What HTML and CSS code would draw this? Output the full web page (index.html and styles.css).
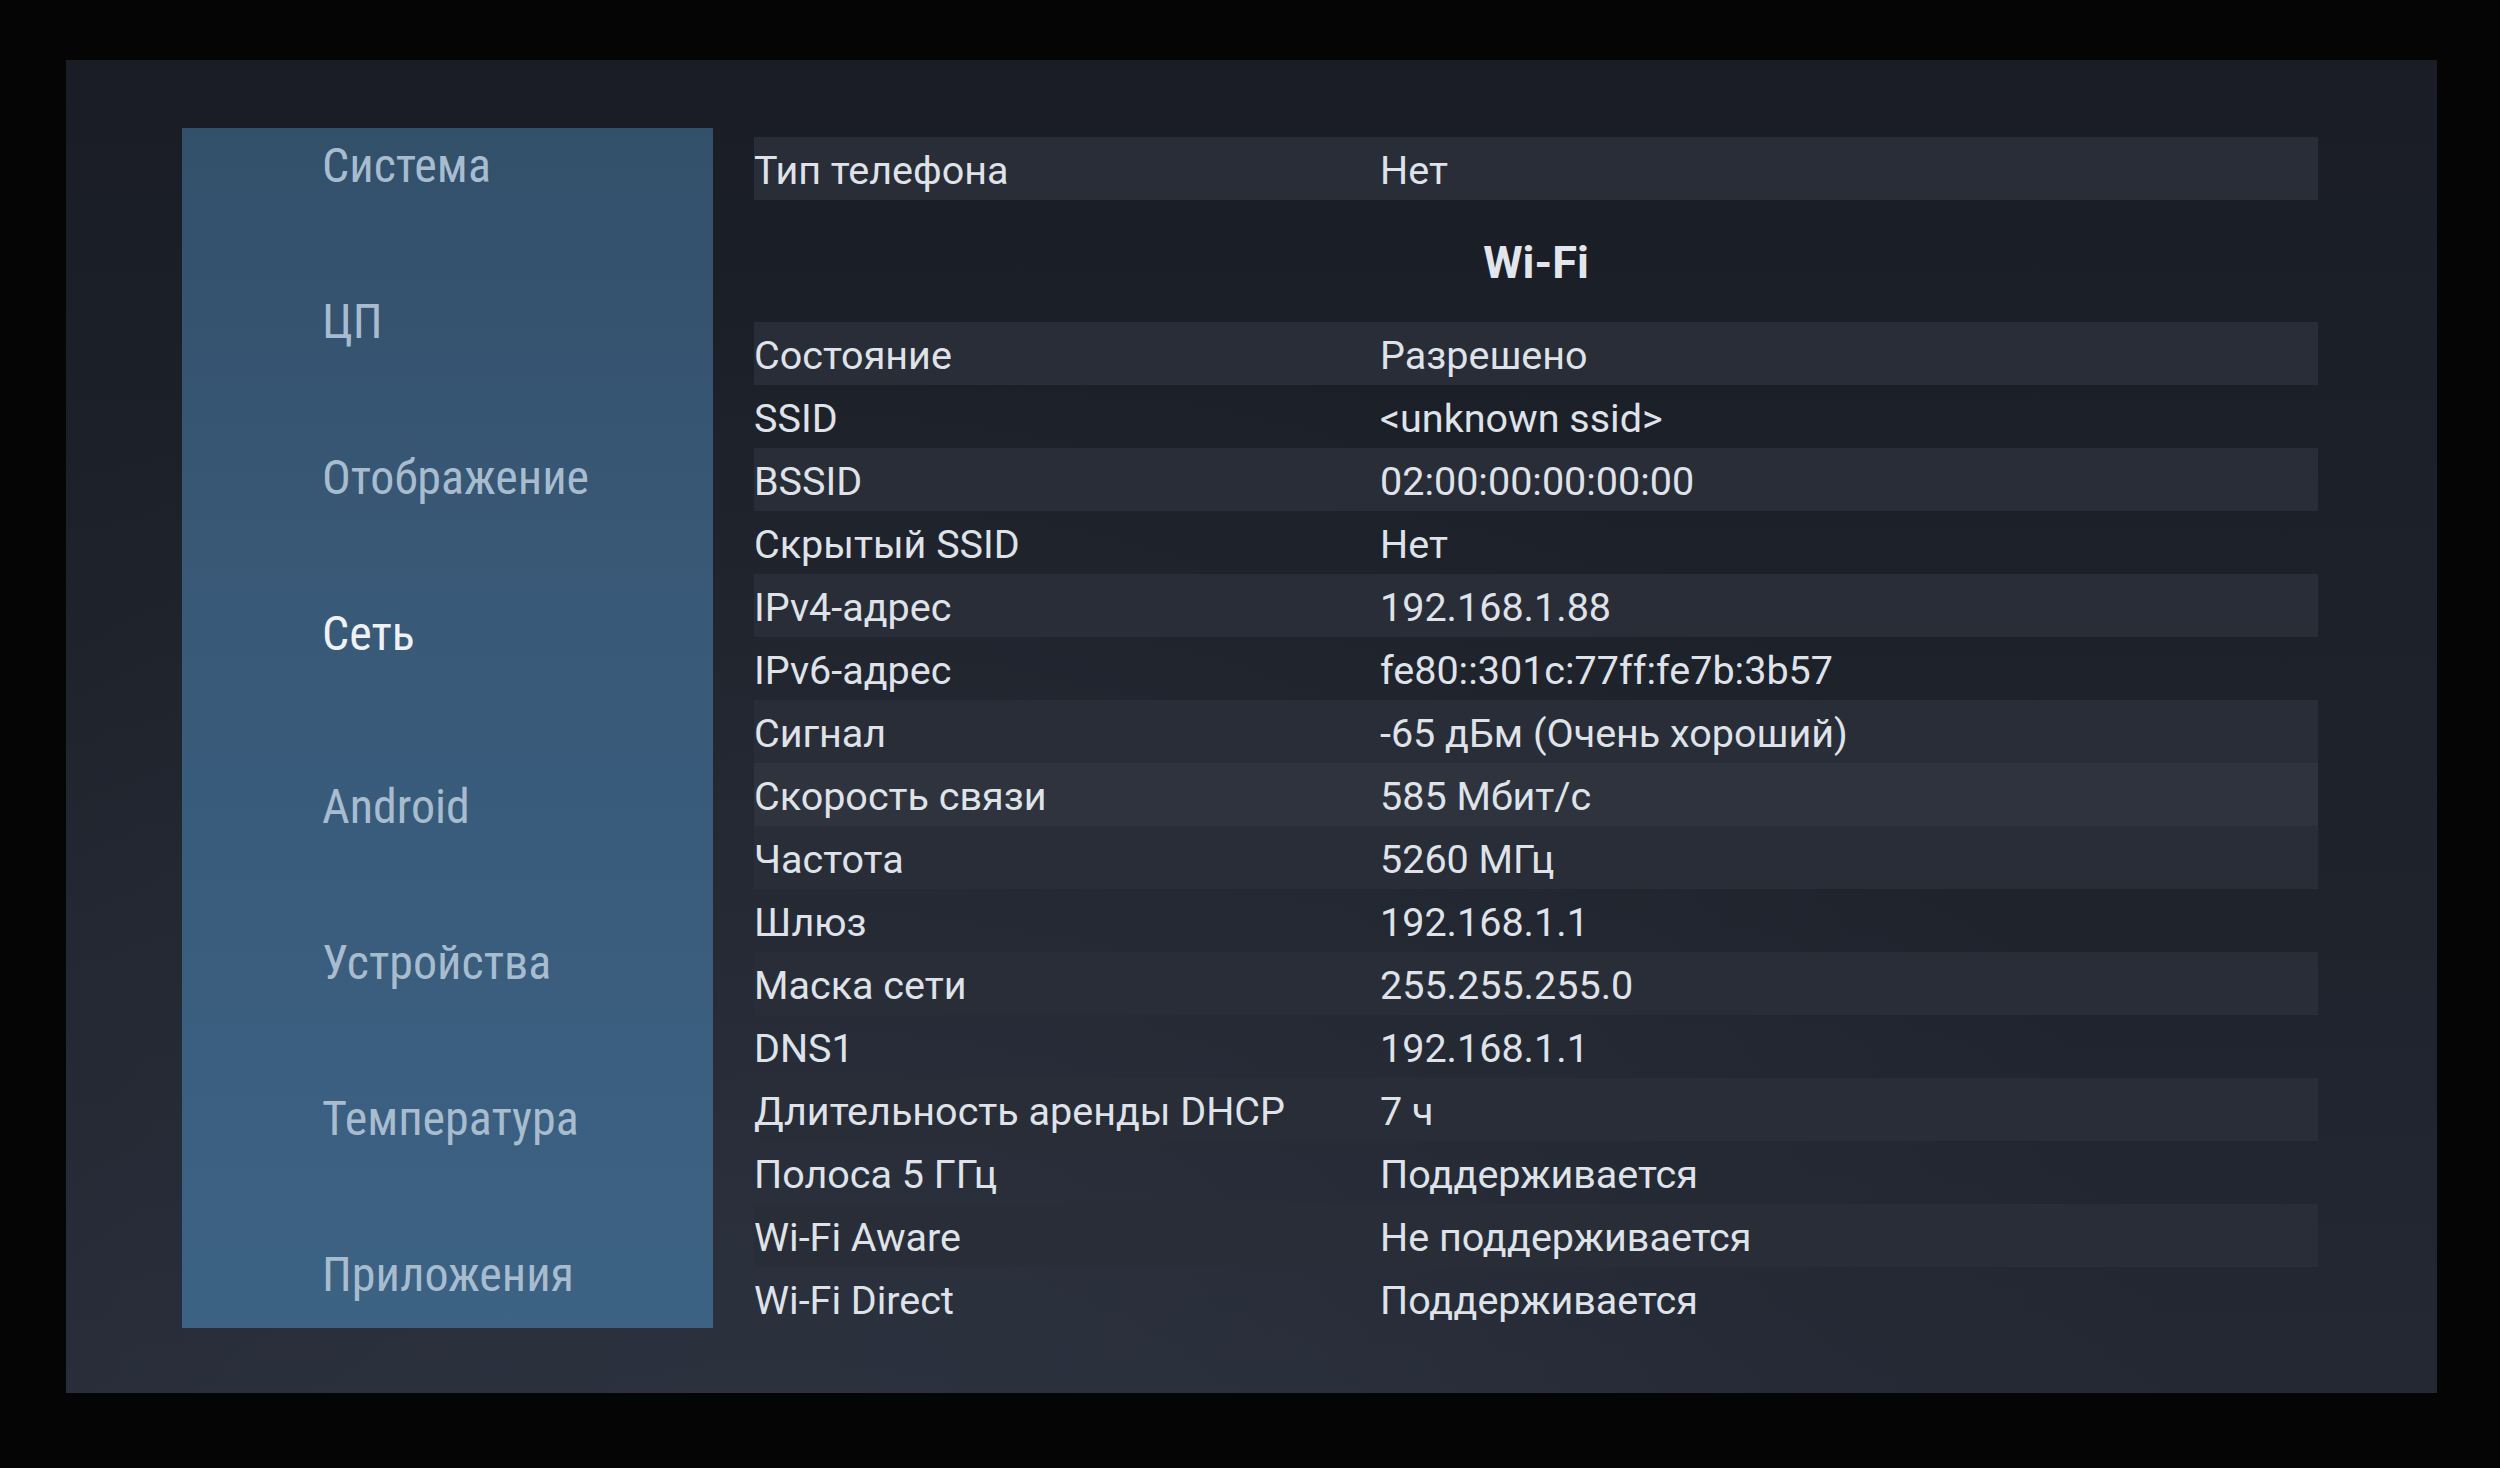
FILE: index.html
```html
<!DOCTYPE html>
<html lang="ru">
<head>
    <meta charset="UTF-8">
    <meta name="viewport" content="width=device-width, initial-scale=1.0">
    <title>Сеть</title>
    <link rel="stylesheet" href="styles.css">
</head>
<body>
    <div class="screen">
        <nav class="sidebar">
            <ul class="menu">
                <li class="menu-item">Система</li>
                <li class="menu-item">ЦП</li>
                <li class="menu-item">Отображение</li>
                <li class="menu-item active">Сеть</li>
                <li class="menu-item">Android</li>
                <li class="menu-item">Устройства</li>
                <li class="menu-item">Температура</li>
                <li class="menu-item">Приложения</li>
            </ul>
        </nav>

        <div class="content">
            <div class="row striped"><span class="label">Тип телефона</span><span class="value">Нет</span></div>

            <div class="section-title">Wi-Fi</div>

            <div class="row striped"><span class="label">Состояние</span><span class="value">Разрешено</span></div>
            <div class="row"><span class="label">SSID</span><span class="value">&lt;unknown ssid&gt;</span></div>
            <div class="row striped"><span class="label">BSSID</span><span class="value">02:00:00:00:00:00</span></div>
            <div class="row"><span class="label">Скрытый SSID</span><span class="value">Нет</span></div>
            <div class="row striped"><span class="label">IPv4-адрес</span><span class="value">192.168.1.88</span></div>
            <div class="row"><span class="label">IPv6-адрес</span><span class="value">fe80::301c:77ff:fe7b:3b57</span></div>
            <div class="row striped"><span class="label">Сигнал</span><span class="value">-65 дБм (Очень хороший)</span></div>
            <div class="row focused"><span class="label">Скорость связи</span><span class="value">585 Мбит/с</span></div>
            <div class="row striped"><span class="label">Частота</span><span class="value">5260 МГц</span></div>
            <div class="row"><span class="label">Шлюз</span><span class="value">192.168.1.1</span></div>
            <div class="row striped"><span class="label">Маска сети</span><span class="value">255.255.255.0</span></div>
            <div class="row"><span class="label">DNS1</span><span class="value">192.168.1.1</span></div>
            <div class="row striped"><span class="label">Длительность аренды DHCP</span><span class="value">7 ч</span></div>
            <div class="row"><span class="label">Полоса 5 ГГц</span><span class="value">Поддерживается</span></div>
            <div class="row striped"><span class="label">Wi-Fi Aware</span><span class="value">Не поддерживается</span></div>
            <div class="row"><span class="label">Wi-Fi Direct</span><span class="value">Поддерживается</span></div>
        </div>
    </div>
</body>
</html>
```

FILE: styles.css
```css
html, body {
    margin: 0;
    padding: 0;
}
body {
    width: 2500px;
    height: 1468px;
    background-color: #050506;
    font-family: Roboto, "Noto Sans", sans-serif;
    color: #dfe3e9;
    overflow: hidden;
}
.screen {
    box-sizing: border-box;
    width: 2371px;
    height: 1333px;
    margin: 60px 0 0 66px;
    padding: 68px 0 0 116px;
    display: flex;
    align-items: flex-start;
    background:
        radial-gradient(ellipse at 30% 110%, rgba(52, 60, 74, 0.55) 0%, rgba(52, 60, 74, 0) 60%),
        linear-gradient(180deg, #1a1d25 0%, #1e222b 55%, #232833 100%);
}
.sidebar {
    width: 531px;
    height: 1200px;
    flex-shrink: 0;
    overflow: hidden;
    background: linear-gradient(180deg, #33506b 0%, #395a79 45%, #3c6284 100%);
}
.menu {
    list-style: none;
    margin: -40px 0 0 0;
    padding: 0 0 0 140px;
}
.menu-item {
    height: 156px;
    line-height: 156px;
    font-family: "Roboto Condensed", Roboto, sans-serif;
    font-stretch: condensed;
    font-size: 48px;
    color: #a8bcd0;
    white-space: nowrap;
}
.menu-item.active {
    color: #eef2f6;
    margin-bottom: 17px;
}
.content {
    width: 1564px;
    margin: 9px 0 0 41px;
}
.row {
    box-sizing: border-box;
    height: 63px;
    padding-top: 6px;
    line-height: 55px;
    display: grid;
    grid-template-columns: 626px 1fr;
    font-size: 39.5px;
    white-space: nowrap;
}
.row.striped {
    background-color: #292d37;
}
.row.focused {
    background-color: #2e333d;
}
.section-title {
    height: 122px;
    padding-top: 4px;
    box-sizing: border-box;
    line-height: 118px;
    text-align: center;
    font-size: 45px;
    font-weight: bold;
    color: #e2e6ec;
}
```
